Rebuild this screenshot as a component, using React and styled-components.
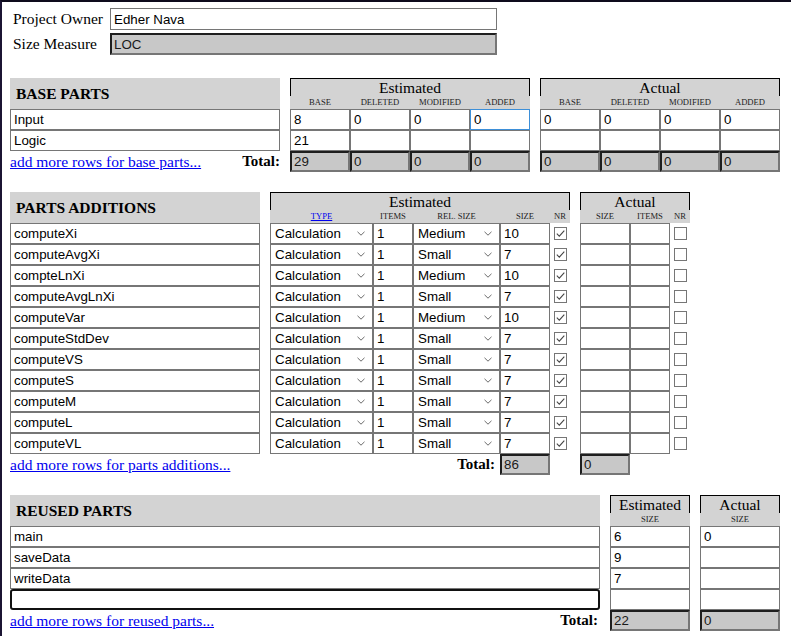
import React from 'react';
import styled, { createGlobalStyle, css } from 'styled-components';

const GlobalStyle = createGlobalStyle`
  html, body { margin: 0; padding: 0; background: #fff; }
  body {
    box-sizing: border-box;
    min-height: 100vh;
    font-family: "Liberation Serif", "Times New Roman", serif;
    font-size: 15.5px;
    color: #000;
    border-top: 2px solid #0e0b1c;
    border-left: 2px solid #1b1433;
  }
`;

const Page = styled.div`
  padding: 6px 0 0 8px;
`;

const InfoGrid = styled.div`
  display: grid;
  grid-template-columns: 100px 387px;
  row-gap: 3px;
  align-items: center;
`;

const InfoLabel = styled.span`
  padding-left: 3px;
  font-size: 15.5px;
`;

const Field = styled.input`
  box-sizing: border-box;
  width: 100%;
  height: ${p => (p.$tall ? '22px' : '21px')};
  margin: 0;
  padding: 1px 3px;
  font-family: "Liberation Sans", Arial, sans-serif;
  font-size: 13.33px;
  color: #000;
  background: #fff;
  border: 1px solid #767676;
  border-radius: 0;
  outline: none;
  ${p => p.$ring === 'blue' && css`border-color: #3d8fd8;`}
  ${p => p.$ring === 'dark' && css`border: 2px solid #111; border-radius: 3px;`}
`;

const GrayField = styled(Field)`
  background: #c8c8c8;
  color: #1a1a1a;
  padding: 0 2px;
  border-width: 2px;
  border-style: solid;
  border-color: #1e1e1e #767676 #767676 #1e1e1e;
`;

const Section = styled.div`
  display: flex;
  gap: 10px;
  margin-top: ${p => p.$top}px;
`;

const Group = styled.div`
  display: grid;
  grid-template-columns: ${p => p.$cols};
  grid-template-rows: 31px;
  grid-auto-rows: 21px;
`;

const NameHead = styled.div`
  grid-column: 1 / -1;
  display: flex;
  align-items: center;
  padding-left: 6px;
  background: #d3d3d3;
  font-weight: bold;
  font-size: 15.5px;
`;

const GroupHead = styled.div`
  grid-column: 1 / -1;
  display: grid;
  grid-template-columns: ${p => p.$cols};
  grid-template-rows: 18px 13px;
  background: #d3d3d3;
`;

const HeadTitle = styled.div`
  grid-column: 1 / -1;
  border: 1px solid #000;
  border-bottom: none;
  text-align: center;
  line-height: 17px;
  font-size: 15.5px;
`;

const ColLabel = styled.div`
  text-align: center;
  font-size: 8.6px;
  line-height: 13px;
  color: #222;
  text-transform: uppercase;
  white-space: nowrap;
`;

const ColLink = styled.a`
  color: #0000ee;
  text-decoration: underline;
`;

const TotalRow = styled.div`
  grid-column: 1 / -1;
  display: flex;
  align-items: center;
  justify-content: space-between;
  padding-right: ${p => p.$pr || 0}px;
`;

const AddLink = styled.a`
  color: #0000ee;
  text-decoration: underline;
  font-size: 15.5px;
  white-space: nowrap;
`;

const TotalLabel = styled.span`
  font-weight: bold;
  font-size: 15px;
  ${p => p.$span && css`
    grid-column: ${p.$span};
    text-align: right;
    padding-right: 5px;
    align-self: center;
  `}
`;

const SelectWrap = styled.div`
  position: relative;
`;

const Select = styled.select`
  appearance: none;
  box-sizing: border-box;
  width: 100%;
  height: 21px;
  margin: 0;
  padding: 0 4px;
  font-family: "Liberation Sans", Arial, sans-serif;
  font-size: 13.33px;
  color: #000;
  background: #fff;
  border: 1px solid #767676;
  border-radius: 0;
  outline: none;
`;

const Chevron = styled.svg`
  position: absolute;
  right: 8px;
  top: 8px;
  pointer-events: none;
`;

const CheckCell = styled.div`
  display: flex;
  align-items: center;
  padding-left: 4px;
`;

const Box = styled.span`
  box-sizing: border-box;
  width: 13px;
  height: 13px;
  border: 1px solid #767676;
  background: #fff;
  display: flex;
  align-items: center;
  justify-content: center;
`;

const Empty = styled.div``;

function Check({ on }) {
  return (
    <CheckCell>
      <Box>
        {on && (
          <svg width="11" height="11" viewBox="0 0 11 11">
            <path d="M1.8 5.6 L4.3 8.1 L9.3 2.6" fill="none" stroke="#444" strokeWidth="1.1" />
          </svg>
        )}
      </Box>
    </CheckCell>
  );
}

function Dropdown({ value, options }) {
  return (
    <SelectWrap>
      <Select defaultValue={value}>
        {options.map(o => <option key={o}>{o}</option>)}
      </Select>
      <Chevron width="8" height="5" viewBox="0 0 8 5">
        <path d="M0.5 0.8 L4 4.2 L7.5 0.8" fill="none" stroke="#6a6a6a" strokeWidth="1" />
      </Chevron>
    </SelectWrap>
  );
}

const baseRows = [
  { name: 'Input', est: ['8', '0', '0', '0'], act: ['0', '0', '0', '0'] },
  { name: 'Logic', est: ['21', '', '', ''], act: ['', '', '', ''] },
];

const partRows = [
  ['computeXi', 'Medium', '10'],
  ['computeAvgXi', 'Small', '7'],
  ['compteLnXi', 'Medium', '10'],
  ['computeAvgLnXi', 'Small', '7'],
  ['computeVar', 'Medium', '10'],
  ['computeStdDev', 'Small', '7'],
  ['computeVS', 'Small', '7'],
  ['computeS', 'Small', '7'],
  ['computeM', 'Small', '7'],
  ['computeL', 'Small', '7'],
  ['computeVL', 'Small', '7'],
];

const reusedRows = [
  ['main', '6', '0'],
  ['saveData', '9', ''],
  ['writeData', '7', ''],
  ['', '', ''],
];

const four = '60px 60px 60px 60px';
const partEst = '103px 40px 87px 50px 20px';
const partAct = '50px 40px 20px';
const types = ['Calculation', 'Data', 'I/O', 'Logic', 'Set-up', 'Text'];
const sizes = ['Very Small', 'Small', 'Medium', 'Large', 'Very Large'];

export default function App() {
  return (
    <>
      <GlobalStyle />
      <Page>
        <InfoGrid>
          <InfoLabel>Project Owner</InfoLabel>
          <Field $tall defaultValue="Edher Nava" />
          <InfoLabel>Size Measure</InfoLabel>
          <GrayField $tall readOnly defaultValue="LOC" />
        </InfoGrid>

        <Section $top={23}>
          <Group $cols="270px">
            <NameHead>BASE PARTS</NameHead>
            {baseRows.map(r => <Field key={r.name} defaultValue={r.name} />)}
            <TotalRow>
              <AddLink href="#">add more rows for base parts...</AddLink>
              <TotalLabel>Total:</TotalLabel>
            </TotalRow>
          </Group>
          <Group $cols={four}>
            <GroupHead $cols={four}>
              <HeadTitle>Estimated</HeadTitle>
              {['Base', 'Deleted', 'Modified', 'Added'].map(l => <ColLabel key={l}>{l}</ColLabel>)}
            </GroupHead>
            {baseRows.map((r, i) =>
              r.est.map((v, j) => (
                <Field key={`${i}-${j}`} defaultValue={v} $ring={i === 0 && j === 3 ? 'blue' : undefined} />
              ))
            )}
            {['29', '0', '0', '0'].map((v, j) => <GrayField key={j} readOnly defaultValue={v} />)}
          </Group>
          <Group $cols={four}>
            <GroupHead $cols={four}>
              <HeadTitle>Actual</HeadTitle>
              {['Base', 'Deleted', 'Modified', 'Added'].map(l => <ColLabel key={l}>{l}</ColLabel>)}
            </GroupHead>
            {baseRows.map((r, i) => r.act.map((v, j) => <Field key={`${i}-${j}`} defaultValue={v} />))}
            {['0', '0', '0', '0'].map((v, j) => <GrayField key={j} readOnly defaultValue={v} />)}
          </Group>
        </Section>

        <Section $top={20}>
          <Group $cols="250px">
            <NameHead>PARTS ADDITIONS</NameHead>
            {partRows.map(r => <Field key={r[0]} defaultValue={r[0]} />)}
            <TotalRow>
              <AddLink href="#">add more rows for parts additions...</AddLink>
            </TotalRow>
          </Group>
          <Group $cols={partEst}>
            <GroupHead $cols={partEst}>
              <HeadTitle>Estimated</HeadTitle>
              <ColLabel><ColLink href="#">Type</ColLink></ColLabel>
              <ColLabel>Items</ColLabel>
              <ColLabel>Rel. Size</ColLabel>
              <ColLabel>Size</ColLabel>
              <ColLabel>NR</ColLabel>
            </GroupHead>
            {partRows.map(r => (
              <React.Fragment key={r[0]}>
                <Dropdown value="Calculation" options={types} />
                <Field defaultValue="1" />
                <Dropdown value={r[1]} options={sizes} />
                <Field defaultValue={r[2]} />
                <Check on />
              </React.Fragment>
            ))}
            <TotalLabel $span="1 / 4">Total:</TotalLabel>
            <GrayField readOnly defaultValue="86" />
            <Empty />
          </Group>
          <Group $cols={partAct}>
            <GroupHead $cols={partAct}>
              <HeadTitle>Actual</HeadTitle>
              <ColLabel>Size</ColLabel>
              <ColLabel>Items</ColLabel>
              <ColLabel>NR</ColLabel>
            </GroupHead>
            {partRows.map(r => (
              <React.Fragment key={r[0]}>
                <Field defaultValue="" />
                <Field defaultValue="" />
                <Check />
              </React.Fragment>
            ))}
            <GrayField readOnly defaultValue="0" />
          </Group>
        </Section>

        <Section $top={20}>
          <Group $cols="590px">
            <NameHead>REUSED PARTS</NameHead>
            {reusedRows.map((r, i) => (
              <Field key={i} defaultValue={r[0]} $ring={i === 3 ? 'dark' : undefined} />
            ))}
            <TotalRow $pr={2}>
              <AddLink href="#">add more rows for reused parts...</AddLink>
              <TotalLabel>Total:</TotalLabel>
            </TotalRow>
          </Group>
          <Group $cols="80px">
            <GroupHead $cols="80px">
              <HeadTitle>Estimated</HeadTitle>
              <ColLabel>Size</ColLabel>
            </GroupHead>
            {reusedRows.map((r, i) => <Field key={i} defaultValue={r[1]} />)}
            <GrayField readOnly defaultValue="22" />
          </Group>
          <Group $cols="80px">
            <GroupHead $cols="80px">
              <HeadTitle>Actual</HeadTitle>
              <ColLabel>Size</ColLabel>
            </GroupHead>
            {reusedRows.map((r, i) => <Field key={i} defaultValue={r[2]} />)}
            <GrayField readOnly defaultValue="0" />
          </Group>
        </Section>
      </Page>
    </>
  );
}
